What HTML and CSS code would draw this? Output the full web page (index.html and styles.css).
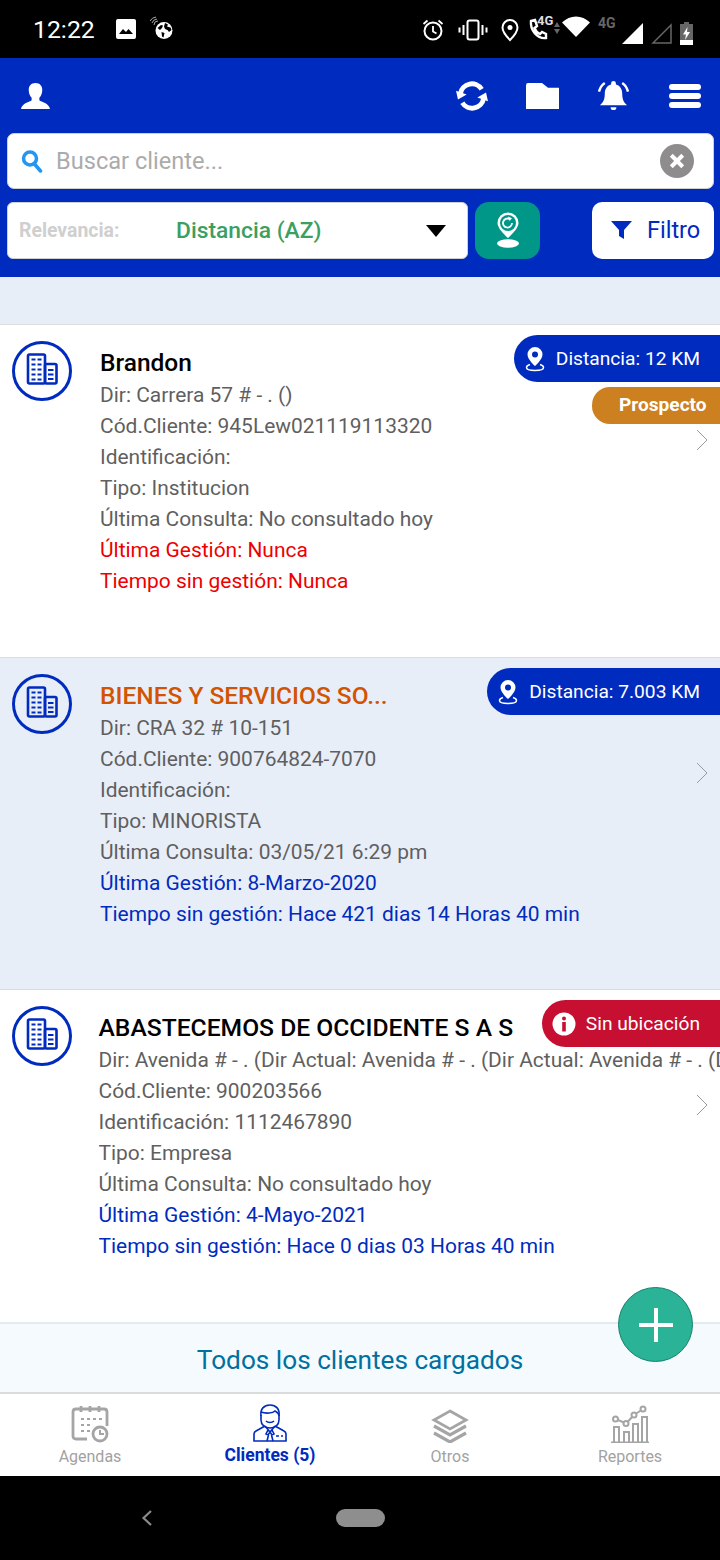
FILE: index.html
```html
<!DOCTYPE html>
<html lang="es">
<head>
<meta charset="utf-8">
<title>Clientes</title>
<link rel="stylesheet" href="styles.css">
</head>
<body>
<div class="app">
  <svg width="0" height="0" class="defs">
    <defs>
      <symbol id="bld" viewBox="0 0 60 60">
        <circle cx="30" cy="30" r="28.5" fill="none" stroke="#002bbf" stroke-width="3"/>
        <g fill="none" stroke="#002bbf" stroke-width="2.600" stroke-linejoin="round">
          <rect x="16" y="13.500" width="17" height="29" rx="1.500"/>
          <rect x="33" y="23" width="11.500" height="19.500" rx="1.500"/>
        </g>
        <g stroke="#002bbf" stroke-width="2.200">
          <path d="M19.500 18.500h4M25.500 18.500h4M19.500 23.500h4M25.500 23.500h4M19.500 28.500h4M25.500 28.500h4M19.500 33.500h4M25.500 33.500h4M19.500 38.500h4M25.500 38.500h4M36 29h5.500M36 33.500h5.500M36 38h5.500"/>
        </g>
      </symbol>
      <symbol id="pin" viewBox="0 0 20 26">
        <path d="M10 1a7.500 7.500 0 0 0-7.500 7.500C2.500 13.500 10 20 10 20s7.500-6.500 7.500-11.500A7.500 7.500 0 0 0 10 1zm0 10.500a3 3 0 1 1 0-6 3 3 0 0 1 0 6z" fill="#fff"/>
        <path d="M5 18.500C2.500 19.200 1.500 20.200 1.500 21.500c0 1.800 3.800 3 8.500 3s8.500-1.200 8.500-3c0-1.300-1-2.300-3.500-3" fill="none" stroke="#fff" stroke-width="1.500"/>
      </symbol>
      <symbol id="chev" viewBox="0 0 12 22">
        <path d="M1 1l10 10L1 21" fill="none" stroke="#9a9a9a" stroke-width="1"/>
      </symbol>
    </defs>
  </svg>

  <div class="status">
    <span class="time">12:22</span>
    <svg class="st-img" width="20" height="20" viewBox="0 0 20 20"><rect width="20" height="20" rx="2" fill="#fff"/><path d="M3 15l4-5 3 3 2.500-3 4.500 5z" fill="#000"/></svg>
    <svg class="st-globe" width="26" height="26" viewBox="0 0 26 26"><circle cx="15" cy="15.500" r="8.500" fill="#fff"/><path d="M8.500 13l3.500-3 2 .5-1 2.500-2 2zM16 8l3 1.500-1 2 3.500 1 1 2.500-2.500 2-1.500-2-2.500-1-1-2.500zM12.500 17l3 1-1 4.500-1.500-1z" fill="#000"/><path d="M1 6a8 8 0 0 1 6-4M3 8a6 6 0 0 1 5-4M5 10a4 4 0 0 1 4-4" fill="none" stroke="#aaa" stroke-width="1"/></svg>
    <span class="grow"></span>
    <svg width="24" height="24" viewBox="0 0 24 24" class="st-a"><circle cx="12" cy="13" r="8.500" fill="none" stroke="#fff" stroke-width="2"/><path d="M12 8v5.500l3.500 2M2.500 6l4-3.500M21.500 6l-4-3.500" fill="none" stroke="#fff" stroke-width="1.800"/></svg>
    <svg width="30" height="24" viewBox="0 0 30 24" class="st-b"><rect x="9.500" y="2.500" width="11" height="19" rx="2" fill="none" stroke="#fff" stroke-width="2"/><path d="M5.500 7v10M24.500 7v10M1.500 9.500v5M28.500 9.500v5" stroke="#fff" stroke-width="2"/></svg>
    <svg width="18" height="24" viewBox="0 0 18 24" class="st-c"><path d="M9 2a7.500 7.500 0 0 0-7.500 7.500C1.500 14.500 9 22 9 22s7.500-7.500 7.500-12.500A7.500 7.500 0 0 0 9 2z" fill="none" stroke="#fff" stroke-width="2"/><circle cx="9" cy="9.500" r="2.500" fill="#fff"/></svg>
    <span class="st-call">
      <svg width="20" height="22" viewBox="0 0 20 22"><path d="M3 3l4-1 2 6-2.500 2c1 3 3 5 5.500 6l2-2 4 2v4C9 21 2 12 3 3z" fill="none" stroke="#fff" stroke-width="2.400"/></svg>
      <b class="tiny call4g">4G</b>
    </span>
    <svg width="6" height="12" viewBox="0 0 6 12" class="st-arrows"><path d="M3 0l3 5H0zM3 12L0 7h6z" fill="#666"/></svg>
    <svg width="28" height="22" viewBox="0 0 28 22" class="st-wifi"><path d="M0 6.500C8-1.500 20-1.500 28 6.500L14 21z" fill="#fff"/></svg>
    <b class="tiny gray4g">4G</b>
    <svg width="21" height="21" viewBox="0 0 21 21" class="st-sig"><path d="M0 21L21 0v21z" fill="#fff"/></svg>
    <svg width="21" height="21" viewBox="0 0 21 21" class="st-sig2"><path d="M2 20L20 2v18z" fill="none" stroke="#666" stroke-width="1.500"/></svg>
    <svg width="13" height="23" viewBox="0 0 13 23" class="st-bat"><path d="M4 0h5v2h4v21H0V2h4z" fill="#666"/><rect y="18" width="13" height="5" fill="#fff"/><path d="M7.500 5L3 12.500h3L5 18l5-8H7z" fill="#fff"/></svg>
  </div>

  <header class="head">
    <div class="toprow">
      <svg width="29" height="26" viewBox="0 0 30 28" preserveAspectRatio="none" class="ic-user"><path d="M15 0c4.500 0 7 3 7 7.500 0 3.500-1.500 7-3 8.500v2.500c2 2 10 3 11 9.500H0c1-6.500 9-7.500 11-9.500V16c-1.500-1.500-3-5-3-8.500C8 3 10.500 0 15 0z" fill="#fff"/></svg>
      <span class="grow"></span>
      <svg width="32" height="30" viewBox="0 0 33 31" class="ic-sync"><path d="M4.500 13a12 12 0 0 1 22-4.500M28.500 18a12 12 0 0 1-22 4.500" fill="none" stroke="#fff" stroke-width="5"/><path d="M0 10l11 4-9 5zM33 21l-11-4 9-5z" fill="#fff"/></svg>
      <svg width="33" height="26" viewBox="0 0 33 27" preserveAspectRatio="none" class="ic-folder"><path d="M0 2.500Q0 0 2 0h14l6 5h11v22H0z" fill="#fff"/></svg>
      <svg width="33" height="30" viewBox="0 0 33 31" class="ic-bell"><path d="M16.500 0a2.500 2.500 0 0 1 2.500 2.500v1c4.500 1.200 6.500 5 6.500 9.500 0 6 1.500 9 5 12H2.500c3.500-3 5-6 5-12 0-4.500 2-8.300 6.500-9.500v-1A2.500 2.500 0 0 1 16.500 0zM13.500 27h6a3 3 0 0 1-6 0z" fill="#fff"/><path d="M1.500 11C2.500 7 4.500 4 7.500 2M31.500 11c-1-4-3-7-6-9" fill="none" stroke="#fff" stroke-width="2.500"/></svg>
      <div class="ic-menu"><i></i><i></i><i></i></div>
    </div>
    <div class="search">
      <svg width="22" height="24" viewBox="0 0 22 24"><circle cx="9" cy="9.500" r="6.500" fill="none" stroke="#2196f3" stroke-width="3.500"/><path d="M13.500 15l6 7" stroke="#2196f3" stroke-width="3.500" stroke-linecap="round"/></svg>
      <span class="search-txt">Buscar cliente...</span>
      <span class="grow"></span>
      <span class="clear"><svg width="16" height="16" viewBox="0 0 14 14"><path d="M2 2l10 10M12 2L2 12" stroke="#fff" stroke-width="3.500"/></svg></span>
    </div>
    <div class="filters">
      <div class="select">
        <span class="sel-label">Relevancia:</span>
        <span class="sel-val">Distancia (AZ)</span>
        <span class="caret"></span>
      </div>
      <button class="geo" type="button">
        <svg width="24" height="36" viewBox="0 0 24 36"><path d="M12 0.500a10.500 10.500 0 0 0-10.500 10.500C1.500 17 12 26 12 26s10.500-9 10.500-15A10.500 10.500 0 0 0 12 0.500z" fill="#fff"/><circle cx="12" cy="11" r="8" fill="#009688"/><path d="M16 11a4.500 4.500 0 1 1-2.500-4" fill="none" stroke="#fff" stroke-width="1.800"/><path d="M12 4.500l4 1.800-2.500 2.700z" fill="#fff"/><ellipse cx="12" cy="31.500" rx="11" ry="4.200" fill="#fff"/></svg>
      </button>
      <span class="grow"></span>
      <button class="filter" type="button">
        <svg width="21" height="18" viewBox="0 0 21 18"><path d="M0 0h21l-8 9v9l-5-3V9z" fill="#002bbf"/></svg>
        <span>Filtro</span>
      </button>
    </div>
  </header>

  <div class="band"></div>

  <main class="list">
    <article class="card">
      <svg class="avatar"><use href="#bld"/></svg>
      <div class="info">
        <h2 class="name">Brandon</h2>
        <p>Dir: Carrera 57 # - . ()</p>
        <p>Cód.Cliente: 945Lew021119113320</p>
        <p>Identificación:</p>
        <p>Tipo: Institucion</p>
        <p>Última Consulta: No consultado hoy</p>
        <p class="red">Última Gestión: Nunca</p>
        <p class="red">Tiempo sin gestión: Nunca</p>
      </div>
      <div class="pill pill-blue"><svg width="20" height="26"><use href="#pin"/></svg><span>Distancia: 12 KM</span></div>
      <div class="pill-prospect">Prospecto</div>
      <svg class="chev" width="12" height="22"><use href="#chev"/></svg>
    </article>

    <article class="card alt">
      <svg class="avatar"><use href="#bld"/></svg>
      <div class="info">
        <h2 class="name orange">BIENES Y SERVICIOS SO...</h2>
        <p>Dir: CRA 32 # 10-151</p>
        <p>Cód.Cliente: 900764824-7070</p>
        <p>Identificación:</p>
        <p>Tipo: MINORISTA</p>
        <p>Última Consulta: 03/05/21 6:29 pm</p>
        <p class="blue">Última Gestión: 8-Marzo-2020</p>
        <p class="blue">Tiempo sin gestión: Hace 421 dias 14 Horas 40 min</p>
      </div>
      <div class="pill pill-blue"><svg width="20" height="26"><use href="#pin"/></svg><span>Distancia: 7.003 KM</span></div>
      <svg class="chev" width="12" height="22"><use href="#chev"/></svg>
    </article>

    <article class="card third">
      <svg class="avatar"><use href="#bld"/></svg>
      <div class="info">
        <h2 class="name">ABASTECEMOS DE OCCIDENTE S A S</h2>
        <p>Dir: Avenida # - . (Dir Actual: Avenida # - . (Dir Actual: Avenida # - . (Dir Actual</p>
        <p>Cód.Cliente: 900203566</p>
        <p>Identificación: 1112467890</p>
        <p>Tipo: Empresa</p>
        <p>Última Consulta: No consultado hoy</p>
        <p class="blue">Última Gestión: 4-Mayo-2021</p>
        <p class="blue">Tiempo sin gestión: Hace 0 dias 03 Horas 40 min</p>
      </div>
      <div class="pill pill-red"><svg width="24" height="24" viewBox="0 0 24 24"><circle cx="12" cy="12" r="11.500" fill="#fff"/><circle cx="12" cy="6.500" r="2" fill="#c60f31"/><rect x="10.200" y="10" width="3.600" height="9.500" fill="#c60f31"/></svg><span>Sin ubicación</span></div>
      <svg class="chev" width="12" height="22"><use href="#chev"/></svg>
    </article>
  </main>

  <div class="loaded">Todos los clientes cargados</div>

  <nav class="tabs">
    <div class="tab">
      <svg width="38" height="38" viewBox="0 0 38 38"><path d="M16 34H5q-3 0-3-3V7q0-3 3-3h28q3 0 3 3v14" fill="none" stroke="#a5a5a5" stroke-width="2.800"/><path d="M10 1v6M19 1v6M28 1v6" stroke="#a5a5a5" stroke-width="2.800"/><path d="M10 14h3M16 14h3M22 14h3M28 14h3M10 20h3M16 20h3M10 26h3M16 26h3" stroke="#a5a5a5" stroke-width="2"/><circle cx="29" cy="29" r="7" fill="none" stroke="#a5a5a5" stroke-width="2.800"/><path d="M29 25v4h4" fill="none" stroke="#a5a5a5" stroke-width="2"/></svg>
      <span>Agendas</span>
    </div>
    <div class="tab active">
      <svg width="34" height="38" viewBox="0 0 34 38"><g fill="none" stroke="#002bbf" stroke-width="1.600"><path d="M8 12c-1-7 3-11 9-11s10 4 9 11"/><path d="M8 8c5 2 12 1 14-1 2 1 3 2 4 4"/><path d="M8 11v5c0 5 4 8 9 8s9-3 9-8v-5"/><path d="M13 17c2 2 6 2 8 0"/><path d="M12 22l-9 5q-2 1-2 3v7h32v-7q0-2-2-3l-9-5"/><path d="M12 22l5 6 5-6M15 26l-2 4 2 1 2-3 2 3 2-1-2-4M15.500 31L14 37M18.500 31l1.500 6"/></g><path d="M23 32h3M28 32h2" stroke="#002bbf" stroke-width="1.600"/></svg>
      <span>Clientes (5)</span>
    </div>
    <div class="tab">
      <svg width="38" height="34" viewBox="0 0 38 34"><path d="M19 2l16 9-16 9L3 11z" fill="none" stroke="#a5a5a5" stroke-width="2.800"/><path d="M3 17l16 9 16-9M3 24l16 9 16-9" fill="none" stroke="#a5a5a5" stroke-width="3.200"/></svg>
      <span>Otros</span>
    </div>
    <div class="tab">
      <svg width="38" height="38" viewBox="0 0 38 38"><g fill="none" stroke="#a5a5a5" stroke-width="2"><circle cx="4.500" cy="14" r="2.500"/><circle cx="15" cy="18.500" r="2.500"/><circle cx="23" cy="10" r="2.500"/><circle cx="32" cy="4" r="2.500"/><path d="M7 15l6 2.500M17 16.500l4.500-5M25 8.500l5-3"/><path d="M3 37V22h5v15M13 37V27h5v10M22 37V19h5v18M31 37V12h5v25"/></g><path d="M0 37.500h38" stroke="#a5a5a5" stroke-width="2"/></svg>
      <span>Reportes</span>
    </div>
  </nav>

  <div class="sysnav">
    <svg width="14" height="18" viewBox="0 0 14 18" class="back"><path d="M11 2L3.500 9l7.500 7" fill="none" stroke="#8a8a8a" stroke-width="2.200"/></svg>
    <span class="home"></span>
  </div>

  <button class="fab" type="button"><svg width="34" height="34" viewBox="0 0 34 34"><path d="M17 1v32M1 17h32" stroke="#fff" stroke-width="4" stroke-linecap="round"/></svg></button>
</div>
</body>
</html>
```
FILE: styles.css
```css
* { box-sizing: border-box; }
html, body { margin: 0; padding: 0; background: #fff; }
body { font-family: Roboto, "Liberation Sans", sans-serif; }
.app { position: relative; width: 720px; height: 1560px; overflow: hidden; display: flex; flex-direction: column; background: #fff; }
.defs { position: absolute; }
.grow { flex: 1; }
svg { display: block; flex: none; }

.status { height: 58px; background: #000; display: flex; align-items: center; padding: 0 0 0 33px; color: #fff; }
.time { font-size: 24.8px; font-weight: 400; width: 83px; }
.st-img { margin-left: 0; margin-top: -1px; }
.st-globe { margin-left: 13px; margin-top: -2px; }
.st-a { margin-right: 13px; margin-top: 1px; }
.st-b { margin-right: 13px; margin-top: 1px; }
.st-c { margin-right: 9px; margin-top: 1px; }
.st-call { position: relative; width: 25px; height: 24px; margin-right: 1px; margin-top: 2px; }
.tiny { font-size: 13px; font-weight: 700; font-family: Roboto, sans-serif; }
.call4g { position: absolute; left: 9px; top: -5px; color: #ddd; }
.st-arrows { margin-right: 2px; margin-top: -3px; }
.st-wifi { margin-right: 8px; margin-top: -5px; }
.gray4g { color: #666; font-size: 14px; width: 20px; margin-top: -12px; margin-right: 4px; }
.st-sig { margin-right: 8px; margin-top: 9px; }
.st-sig2 { margin-right: 8px; margin-top: 9px; }
.st-bat { margin-right: 27px; margin-top: 9px; }

.head { background: #002bbf; height: 219px; padding: 0 6px 0 7px; display: flex; flex-direction: column; }
.toprow { height: 75px; display: flex; align-items: center; padding: 0 13px 0 14px; }
.ic-user { margin-top: 1px; }
.ic-sync { margin-right: 38px; }
.ic-folder { margin-right: 38px; margin-top: 1px; }
.ic-bell { margin-right: 39px; }
.ic-menu { width: 32px; display: flex; flex-direction: column; gap: 3px; }
.ic-menu i { display: block; height: 6px; border-radius: 3px; background: #fff; }

.search { height: 56px; background: #fff; border: 1px solid #cfcfcf; border-radius: 7px; display: flex; align-items: center; padding: 0 19px 0 13px; }
.search-txt { font-size: 23.600px; color: #ababab; margin-left: 13px; }
.clear { width: 34px; height: 34px; border-radius: 50%; background: #8e8c8c; display: flex; align-items: center; justify-content: center; }

.filters { display: flex; margin-top: 13px; height: 57px; }
.select { width: 461px; height: 57px; background: #fff; border: 1px solid #cfcfcf; border-radius: 6px; display: flex; align-items: center; padding: 0 21px 0 11px; }
.sel-label { font-size: 19.400px; font-weight: 700; color: #cfcfcf; width: 157px; margin-top: -1px; }
.sel-val { font-size: 22.800px; font-weight: 500; color: #3c9f62; flex: 1; margin-top: -1px; }
.caret { width: 0; height: 0; border-left: 10px solid transparent; border-right: 10px solid transparent; border-top: 12px solid #000; }
.geo { width: 65px; height: 57px; margin-left: 7px; background: #009688; border: 0; border-radius: 14px; padding: 0 0 2px; display: flex; align-items: center; justify-content: center; }
.filter { width: 122px; height: 57px; background: #fff; border: 0; border-radius: 10px; display: flex; align-items: center; padding: 0 0 2px 19px; font: 400 23.500px Roboto, sans-serif; color: #002bbf; gap: 15px; }

.band { height: 47px; background: #e8eef8; flex: none; }
.list { display: flex; flex-direction: column; flex: none; }
.card { position: relative; height: 333px; background: #fff; border-top: 1px solid #dcdcdc; display: flex; padding: 16px 0 0 12px; overflow: hidden; }
.card.alt { height: 332px; background: #e8eef8; }
.avatar { width: 60px; height: 60px; }
.info { margin-left: 28px; flex: 1; min-width: 0; }
.third .info { margin-left: 26.500px; }
.name { margin: 6px 0 0; height: 33px; line-height: 32px; font-size: 24.500px; font-weight: 500; color: #000; white-space: nowrap; }
.third .name { font-size: 24.650px; }
.name.orange { color: #d35400; }
.info p { margin: 0; height: 31px; line-height: 31px; font-size: 20.950px; color: #5f5f5f; white-space: nowrap; overflow: hidden; }
.info p.red { color: #ee0000; }
.info p.blue { color: #002bbf; }

.pill { position: absolute; right: 0; top: 10px; height: 47px; border-radius: 24px 0 0 24px; display: flex; align-items: center; color: #fff; font-size: 19.200px; padding: 0 20px 0 11px; gap: 11px; }
.pill-blue { background: #002bbf; }
.pill-red { background: #c60f31; padding-left: 10px; padding-right: 20px; gap: 10px; }
.pill-prospect { position: absolute; right: 0; top: 62px; height: 37px; width: 128px; border-radius: 18px 0 0 18px; background: #cd801f; color: #fff; font-size: 19.100px; font-weight: 700; display: flex; align-items: center; padding: 0 0 2px 27px; }
.chev { position: absolute; right: 12px; top: 104px; }

.loaded { height: 72px; flex: none; background: #f4fafd; border-top: 2px solid #e2ebee; border-bottom: 2px solid #d8dcdc; display: flex; align-items: center; justify-content: center; padding-top: 3px; font-size: 26.200px; color: #00709f; }

.tabs { height: 82px; flex: none; background: #fff; display: grid; grid-template-columns: repeat(4, 1fr); }
.tab { display: flex; flex-direction: column; align-items: center; justify-content: flex-end; height: 72px; color: #a2a2a2; font-size: 16px; gap: 4px; }
.tab.active { color: #002bbf; font-weight: 700; font-size: 17.500px; padding-bottom: 1px; gap: 3px; }

.sysnav { flex: 1; background: #000; display: flex; align-items: center; padding-left: 140px; }
.home { width: 49px; height: 18px; border-radius: 9px; background: #8e8e8e; margin-left: 182px; }

.fab { position: absolute; left: 618px; top: 1287px; width: 75px; height: 75px; border-radius: 50%; background: #2ab397; border: 1px solid #17826d; padding: 0; display: flex; align-items: center; justify-content: center; }
```
